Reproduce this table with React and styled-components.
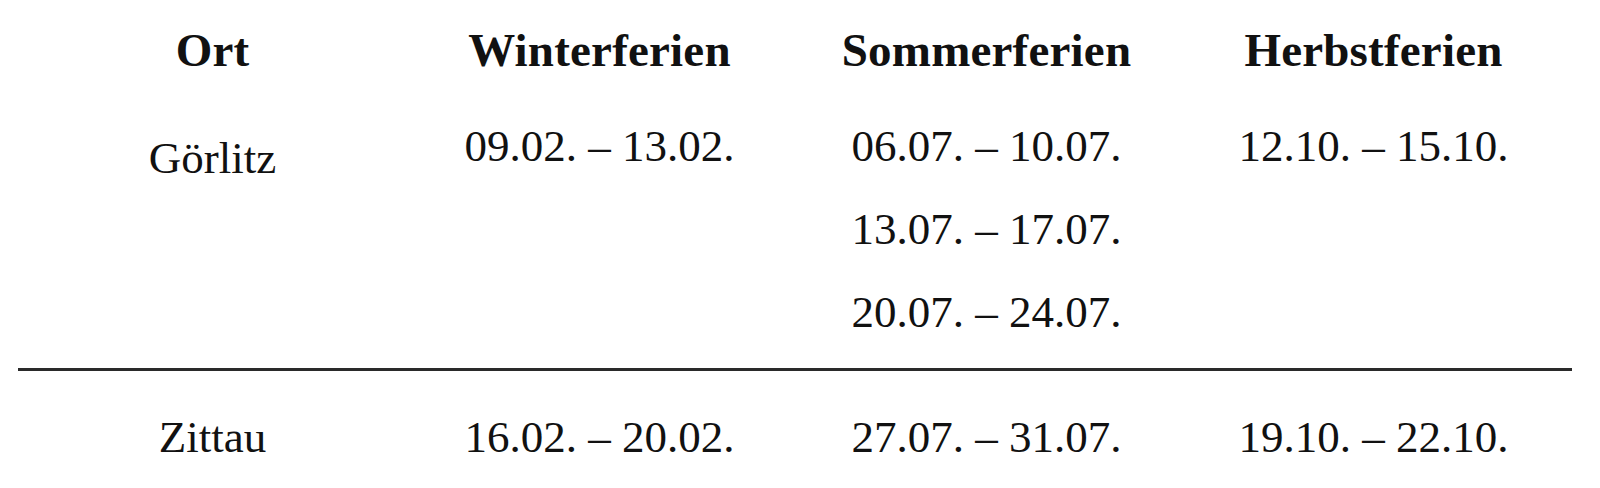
import React from "react";
import styled, { createGlobalStyle } from "styled-components";

const GlobalStyle = createGlobalStyle`
  html, body {
    margin: 0;
    padding: 0;
    background: #ffffff;
  }
  body {
    font-family: "Liberation Serif", "Times New Roman", serif;
    color: #111111;
  }
`;

const Page = styled.div`
  width: 1600px;
  height: 488px;
  overflow: hidden;
  padding-left: 19px;
  box-sizing: border-box;
`;

const Table = styled.div`
  display: flex;
  flex-direction: column;
  width: 1548px;
`;

const Grid = styled.div`
  display: grid;
  grid-template-columns: repeat(4, 387px);
`;

const HeaderCell = styled.div`
  font-size: 47px;
  font-weight: 700;
  line-height: 100px;
  text-align: center;
  letter-spacing: 0.2px;
`;

const Section = styled(Grid)`
  padding-top: ${(p) => p.$top}px;
  padding-bottom: ${(p) => p.$bottom}px;
`;

const Column = styled.div`
  display: flex;
  flex-direction: column;
  align-items: center;
`;

const Value = styled.div`
  font-size: 45px;
  line-height: 83px;
  text-align: center;
  padding-top: ${(p) => p.$shift || 0}px;
  white-space: nowrap;
`;

const Divider = styled.div`
  width: 1554px;
  height: 3px;
  margin-left: -1px;
  background: #2a2a2a;
`;

const headers = ["Ort", "Winterferien", "Sommerferien", "Herbstferien"];

const places = [
  {
    name: "Görlitz",
    winter: ["09.02. – 13.02."],
    summer: ["06.07. – 10.07.", "13.07. – 17.07.", "20.07. – 24.07."],
    autumn: ["12.10. – 15.10."],
  },
  {
    name: "Zittau",
    winter: ["16.02. – 20.02."],
    summer: ["27.07. – 31.07."],
    autumn: ["19.10. – 22.10."],
  },
];

function PlaceSection({ place, top, bottom, nameShift }) {
  return (
    <Section $top={top} $bottom={bottom}>
      <Column>
        <Value $shift={nameShift}>{place.name}</Value>
      </Column>
      <Column>
        {place.winter.map((d) => (
          <Value key={d}>{d}</Value>
        ))}
      </Column>
      <Column>
        {place.summer.map((d) => (
          <Value key={d}>{d}</Value>
        ))}
      </Column>
      <Column>
        {place.autumn.map((d) => (
          <Value key={d}>{d}</Value>
        ))}
      </Column>
    </Section>
  );
}

export default function App() {
  return (
    <>
      <GlobalStyle />
      <Page>
        <Table>
          <Grid>
            {headers.map((h) => (
              <HeaderCell key={h}>{h}</HeaderCell>
            ))}
          </Grid>
          <PlaceSection place={places[0]} top={5} bottom={14} nameShift={12} />
          <Divider />
          <PlaceSection place={places[1]} top={25} bottom={0} nameShift={0} />
        </Table>
      </Page>
    </>
  );
}
